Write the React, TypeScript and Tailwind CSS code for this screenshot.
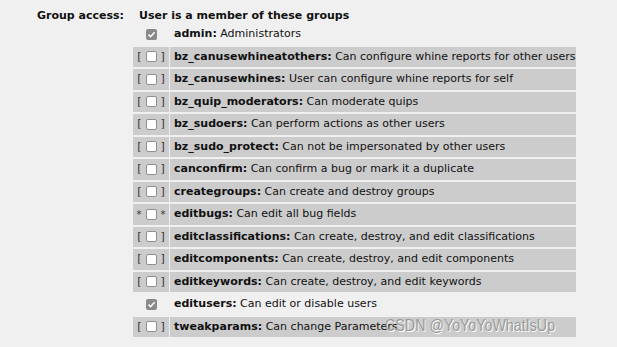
import React from 'react';

type Group = {
  name: string;
  desc: string;
  kind: 'member' | 'bracket' | 'star';
};

const groups: Group[] = [
  { name: 'admin', desc: 'Administrators', kind: 'member' },
  { name: 'bz_canusewhineatothers', desc: 'Can configure whine reports for other users', kind: 'bracket' },
  { name: 'bz_canusewhines', desc: 'User can configure whine reports for self', kind: 'bracket' },
  { name: 'bz_quip_moderators', desc: 'Can moderate quips', kind: 'bracket' },
  { name: 'bz_sudoers', desc: 'Can perform actions as other users', kind: 'bracket' },
  { name: 'bz_sudo_protect', desc: 'Can not be impersonated by other users', kind: 'bracket' },
  { name: 'canconfirm', desc: 'Can confirm a bug or mark it a duplicate', kind: 'bracket' },
  { name: 'creategroups', desc: 'Can create and destroy groups', kind: 'bracket' },
  { name: 'editbugs', desc: 'Can edit all bug fields', kind: 'star' },
  { name: 'editclassifications', desc: 'Can create, destroy, and edit classifications', kind: 'bracket' },
  { name: 'editcomponents', desc: 'Can create, destroy, and edit components', kind: 'bracket' },
  { name: 'editkeywords', desc: 'Can create, destroy, and edit keywords', kind: 'bracket' },
  { name: 'editusers', desc: 'Can edit or disable users', kind: 'member' },
  { name: 'tweakparams', desc: 'Can change Parameters', kind: 'bracket' },
];

const EmptyBox = () => (
  <span className="inline-block w-[11px] h-[11px] bg-white border border-[#8f8f8f] rounded-[2px]" />
);

const CheckedBox = () => (
  <span className="inline-flex items-center justify-center w-[11px] h-[11px] bg-[#8a8a8a] rounded-[2px]">
    <svg width="9" height="9" viewBox="0 0 9 9">
      <path d="M1.5 4.6 L3.6 6.7 L7.6 2.2" fill="none" stroke="white" strokeWidth="1.6" />
    </svg>
  </span>
);

const App = () => {
  return (
    <div
      className="relative w-[617px] h-[347px] overflow-hidden bg-[#f0f0f0] text-[11px] text-[#111]"
      style={{ fontFamily: '"DejaVu Sans", Verdana, sans-serif' }}
    >
      <div className="flex pt-[8px]">
        {/* label column */}
        <div className="w-[125px] text-right font-bold leading-[16px] pr-[1px]">Group access:</div>

        <div className="ml-[8px]">
          <div className="pl-[6px] font-bold leading-[16px]">User is a member of these groups</div>

          <div className="grid grid-cols-[36px_406px] gap-x-px gap-y-[2px]">
            {groups.map((g) => {
              const shaded = g.kind !== 'member';
              return (
                <React.Fragment key={g.name}>
                  <div
                    className={`h-[20.5px] flex items-center justify-center gap-[4px] text-[#333] ${shaded ? 'bg-[#cccccc]' : ''}`}
                  >
                    {g.kind === 'member' && <CheckedBox />}
                    {g.kind === 'bracket' && (
                      <>
                        <span>[</span>
                        <EmptyBox />
                        <span>]</span>
                      </>
                    )}
                    {g.kind === 'star' && (
                      <>
                        <span className="text-[10px]">*</span>
                        <EmptyBox />
                        <span className="text-[10px]">*</span>
                      </>
                    )}
                  </div>
                  <div
                    className={`h-[20.5px] flex items-center pl-[4px] whitespace-nowrap ${shaded ? 'bg-[#cccccc]' : ''}`}
                  >
                    <span className="font-bold">{g.name}:</span>
                    <span>&nbsp;{g.desc}</span>
                  </div>
                </React.Fragment>
              );
            })}
          </div>
        </div>
      </div>

      {/* watermark */}
      <div
        className="absolute left-[385px] top-[315px] origin-left scale-x-[0.84] text-[17px] text-[#9a9a9a] leading-[22px] whitespace-nowrap"
        style={{ fontFamily: '"Liberation Sans", Arial, sans-serif', textShadow: '1px 1px 0 #ffffff' }}
      >
        CSDN @YoYoYoWhatIsUp
      </div>
    </div>
  );
};

export default App;
